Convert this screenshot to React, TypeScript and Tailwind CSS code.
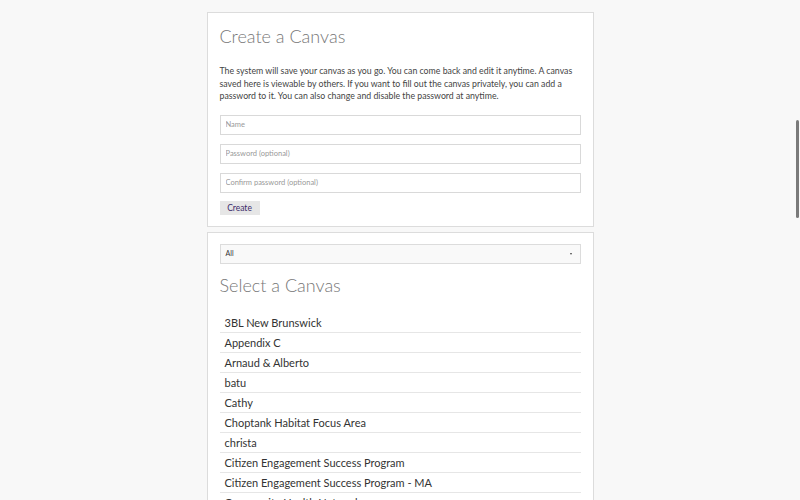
import React from 'react';

const canvases = [
  '3BL New Brunswick',
  'Appendix C',
  'Arnaud & Alberto',
  'batu',
  'Cathy',
  'Choptank Habitat Focus Area',
  'christa',
  'Citizen Engagement Success Program',
  'Citizen Engagement Success Program - MA',
  'Community Health Network',
  'Cooperative Extension',
];

const App: React.FC = () => {
  return (
    <div className="h-[500px] overflow-hidden bg-[#f8f8f8] pt-[12px] font-['Lato',sans-serif] text-[#333]">
      {/* Create panel */}
      <div className="mx-auto w-[387px] border border-[#dcdcdc] bg-white px-[12px] pt-[12px] pb-[9px]">
        <h1 className="text-[18px] leading-[22px] font-light text-[#777]">Create a Canvas</h1>
        <p className="mt-[18px] text-[8.75px] leading-[12.5px] text-[#444]">
          The system will save your canvas as you go. You can come back and edit it anytime. A canvas
          saved here is viewable by others. If you want to fill out the canvas privately, you can add a
          password to it. You can also change and disable the password at anytime.
        </p>
        <div className="mt-[12px] flex flex-col gap-[9px]">
          <input
            className="h-[20px] border border-[#d9d9d9] px-[5px] text-[7.5px] text-[#333] placeholder-[#999] outline-none"
            placeholder="Name"
          />
          <input
            type="password"
            className="h-[20px] border border-[#d9d9d9] px-[5px] text-[7.5px] text-[#333] placeholder-[#999] outline-none"
            placeholder="Password (optional)"
          />
          <input
            type="password"
            className="h-[20px] border border-[#d9d9d9] px-[5px] text-[7.5px] text-[#333] placeholder-[#999] outline-none"
            placeholder="Confirm password (optional)"
          />
        </div>
        <button className="mt-[8px] h-[14px] w-[40px] bg-[#e6e6e6] text-[8.5px] leading-[14px] text-[#3b2b6b]">
          Create
        </button>
      </div>

      {/* Select panel */}
      <div className="mx-auto mt-[5px] w-[387px] border border-[#dcdcdc] bg-white px-[12px] pt-[11px]">
        <div className="relative flex h-[20px] items-center border border-[#dcdcdc] bg-[#f9f9f9] px-[5px] text-[7px] text-[#333]">
          All
          <span className="absolute right-[8px] top-[8px] h-0 w-0 border-x-[1.5px] border-t-[2px] border-x-transparent border-t-[#444]" />
        </div>
        <h2 className="mt-[10px] text-[18px] leading-[22px] font-light text-[#777]">Select a Canvas</h2>
        <ul className="mt-[17px]">
          {canvases.map((name) => (
            <li
              key={name}
              className="h-[20px] border-b border-[#e6e6e6] px-[5px] text-[11px] leading-[20px] text-[#333]"
            >
              {name}
            </li>
          ))}
        </ul>
      </div>

      {/* overlay scrollbar */}
      <div className="fixed right-[1px] top-[120px] h-[98px] w-[3px] rounded-full bg-[#7a7a7a]" />
    </div>
  );
};

export default App;
